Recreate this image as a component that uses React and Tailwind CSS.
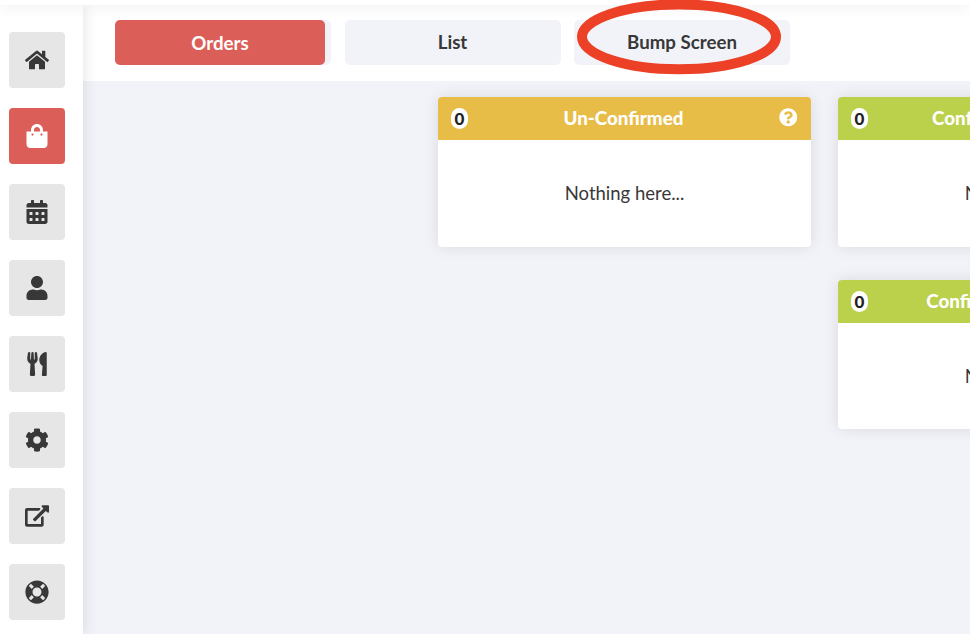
import React from "react";
import { FaHome, FaShoppingBag, FaCalendarAlt, FaUser, FaUtensils, FaCog, FaLifeRing, FaQuestionCircle } from "react-icons/fa";

function ExternalIcon({ className }) {
  return (
    <svg viewBox="0 0 576 512" fill="currentColor" className={className}>
      <path d="M576 24v127.984c0 21.461-25.96 31.98-40.971 16.971l-35.707-35.709-243.523 243.523c-9.373 9.373-24.568 9.373-33.941 0l-22.627-22.627c-9.373-9.373-9.373-24.569 0-33.941L442.756 76.676l-35.703-35.705C391.982 25.9 402.656 0 424.024 0H552c13.255 0 24 10.745 24 24zM407.029 270.794l-16 16A23.999 23.999 0 0 0 384 303.765V448H64V128h264a24.003 24.003 0 0 0 16.97-7.029l16-16C376.089 89.851 365.381 64 344 64H48C21.49 64 0 85.49 0 112v352c0 26.51 21.49 48 48 48h352c26.51 0 48-21.49 48-48V287.764c0-21.382-25.852-32.09-40.971-16.97z" />
    </svg>
  );
}

const NAV = [
  { id: "home", Icon: FaHome },
  { id: "orders", Icon: FaShoppingBag, active: true },
  { id: "calendar", Icon: FaCalendarAlt },
  { id: "user", Icon: FaUser },
  { id: "menu", Icon: FaUtensils },
  { id: "settings", Icon: FaCog },
  { id: "external", Icon: ExternalIcon },
  { id: "support", Icon: FaLifeRing },
];

function Sidebar() {
  return (
    <nav className="z-10 flex w-[83px] shrink-0 flex-col gap-5 bg-white pt-[27px] pl-[9px] shadow-[0_0_15px_rgba(0,0,0,0.12)]">
      {NAV.map(({ id, Icon, active }) => (
        <button
          key={id}
          className={`flex size-14 shrink-0 items-center justify-center rounded ${active ? "bg-[#dc5e58] text-white" : "bg-[#e6e6e6] text-[#383838]"}`}
        >
          <Icon className="size-6" />
        </button>
      ))}
    </nav>
  );
}

function Tab({ label, active }) {
  return (
    <div className="h-[45px] w-[216px] rounded-[5px] bg-[#f2f3f8]">
      <button
        className={`flex h-[45px] items-center justify-center rounded-[5px] text-[18.7px] leading-[19px] font-bold ${active ? "w-[210px] bg-[#dc5e58] pt-px text-white" : "w-full pb-px text-[#383838]"}`}
      >
        {label}
      </button>
    </div>
  );
}

function Card({ title, color, height = "h-[150px]", titleInset = "" }) {
  return (
    <section className={`flex w-[373px] shrink-0 flex-col overflow-hidden rounded bg-white shadow-[0_0_15px_rgba(0,0,0,0.1)] ${height}`}>
      <header className={`flex h-[43px] shrink-0 items-center justify-between pr-[13.5px] pl-[13px] text-white ${color}`}>
        <span className="flex h-[21px] w-[17px] shrink-0 items-center justify-center rounded-full bg-white text-[17px] leading-none font-black text-[#222]">0</span>
        <h2 className={`pb-[2px] text-[18.75px] leading-[19px] font-black whitespace-nowrap ${titleInset}`}>{title}</h2>
        <FaQuestionCircle className="mb-[2px] size-[18.5px] shrink-0" />
      </header>
      <p className="flex h-[107px] shrink-0 items-center justify-center text-[18.5px] text-[#383838]">Nothing here...</p>
    </section>
  );
}

export default function App() {
  return (
    <div className="relative flex h-[634px] w-[970px] flex-col overflow-hidden bg-[#f2f3f8] font-['Lato',sans-serif]">
      <div className="z-20 h-[5px] shrink-0 bg-white shadow-[0_0_15px_rgba(0,0,0,0.12)]" />
      <div className="flex min-h-0 flex-1">
        <Sidebar />
        <main className="flex min-w-0 flex-1 flex-col">
          <div className="flex h-[76px] shrink-0 gap-[13.5px] bg-white pt-[15px] pl-8">
            <Tab label="Orders" active />
            <Tab label="List" />
            <Tab label="Bump Screen" />
          </div>
          <div className="flex gap-[27px] pt-4 pl-[355px]">
            <Card title="Un-Confirmed" color="bg-[#e7bc47]" />
            <div className="flex shrink-0 flex-col gap-[33px]">
              <Card title="Confirmed (Deliveries)" color="bg-[#bbd04b]" titleInset="pl-[4px]" />
              <Card title="Confirmed (Collections)" color="bg-[#bbd04b]" titleInset="pl-[2px]" height="h-[149px]" />
            </div>
          </div>
        </main>
      </div>
      <svg className="pointer-events-none absolute top-0 left-[574px] z-30 h-20 w-[210px]" viewBox="0 0 210 80" fill="none">
        <ellipse cx="105" cy="36.8" rx="97" ry="32.4" stroke="#ec4126" strokeWidth="10" />
      </svg>
    </div>
  );
}
